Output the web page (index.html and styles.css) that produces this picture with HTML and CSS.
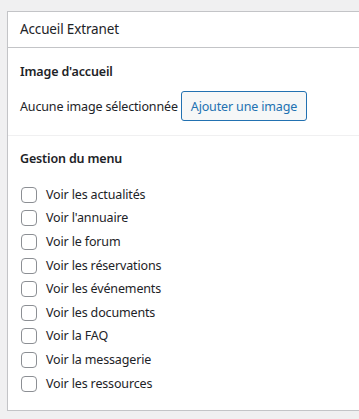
FILE: index.html
```html
<!DOCTYPE html>
<html lang="fr">
<head>
    <meta charset="UTF-8">
    <meta name="viewport" content="width=device-width, initial-scale=1.0">
    <title>Accueil Extranet</title>
    <link rel="stylesheet" href="styles.css">
</head>
<body>
    <div class="postbox">
        <h2 class="postbox-title">Accueil Extranet</h2>

        <div class="section">
            <h3>Image d'accueil</h3>
            <div class="image-row">
                <span class="no-image">Aucune image sélectionnée</span>
                <button type="button" class="button">Ajouter une image</button>
            </div>
        </div>

        <div class="section section-menu">
            <h3>Gestion du menu</h3>
            <ul class="menu-list">
                <li><label><input type="checkbox"> Voir les actualités</label></li>
                <li><label><input type="checkbox"> Voir l'annuaire</label></li>
                <li><label><input type="checkbox"> Voir le forum</label></li>
                <li><label><input type="checkbox"> Voir les réservations</label></li>
                <li><label><input type="checkbox"> Voir les événements</label></li>
                <li><label><input type="checkbox"> Voir les documents</label></li>
                <li><label><input type="checkbox"> Voir la FAQ</label></li>
                <li><label><input type="checkbox"> Voir la messagerie</label></li>
                <li><label><input type="checkbox"> Voir les ressources</label></li>
            </ul>
        </div>
    </div>
</body>
</html>
```

FILE: styles.css
```css
body {
    margin: 0;
    background: #f0f0f1;
    font-family: 'Noto Sans', sans-serif;
    font-size: 12.5px;
    letter-spacing: -0.15px;
    color: #1d2327;
}

.postbox {
    margin: 11px 0 0 7px;
    background: #fff;
    border: 1px solid #c3c4c7;
    border-right: none;
    box-shadow: 0 1px 1px rgba(0, 0, 0, 0.04);
}

.postbox-title {
    margin: 0;
    padding: 7px 12px 8px;
    font-size: 13.5px;
    font-weight: 400;
    line-height: 20px;
    border-bottom: 1px solid #c3c4c7;
}

.section {
    padding: 14px 12px 14px;
    border-bottom: 1px solid #f0f0f1;
}

.section:last-child {
    border-bottom: none;
}

.section h3 {
    margin: 0;
    font-size: 12.5px;
    font-weight: 600;
    line-height: 20px;
}

.image-row {
    display: flex;
    align-items: center;
    gap: 3px;
    margin-top: 9px;
}

.button {
    height: 30px;
    padding: 0 9px;
    font-family: inherit;
    font-size: 12.5px;
    letter-spacing: -0.15px;
    color: #2271b1;
    background: #f6f7f7;
    border: 1px solid #2271b1;
    border-radius: 3px;
    cursor: pointer;
}

.section-menu {
    padding-top: 13px;
    padding-bottom: 15px;
}

.menu-list {
    list-style: none;
    margin: 14px 0 0;
    padding: 0;
}

.menu-list li {
    height: 23.6px;
    display: flex;
    align-items: center;
}

.menu-list label {
    display: flex;
    align-items: center;
    gap: 9px;
    line-height: 20px;
}

.menu-list input {
    appearance: none;
    margin: 0 0 0 1px;
    width: 16px;
    height: 16px;
    border: 1px solid #8c8f94;
    border-radius: 4px;
    background: #fff;
}
```
